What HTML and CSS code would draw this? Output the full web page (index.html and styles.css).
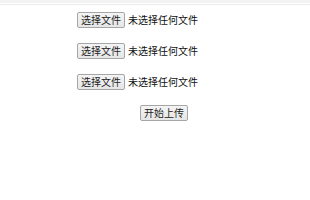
FILE: index.html
```html
<!DOCTYPE html>
<html lang="zh-CN">
<head>
    <meta charset="UTF-8">
    <title>上传文件</title>
    <link rel="stylesheet" href="styles.css">
</head>
<body>
    <div class="top-band"></div>
    <div class="top-line"></div>

    <form class="upload-form">
        <div class="file-row">
            <button type="button" class="file-btn">选择文件</button>
            <span class="file-name">未选择任何文件</span>
        </div>
        <div class="file-row">
            <button type="button" class="file-btn">选择文件</button>
            <span class="file-name">未选择任何文件</span>
        </div>
        <div class="file-row">
            <button type="button" class="file-btn">选择文件</button>
            <span class="file-name">未选择任何文件</span>
        </div>
        <div class="submit-row">
            <button type="button" class="file-btn">开始上传</button>
        </div>
    </form>
</body>
</html>
```

FILE: styles.css
```css
body {
    margin: 0;
    background: #fff;
    font-family: "Noto Sans CJK SC", "Liberation Sans", sans-serif;
    font-size: 10px;
    color: #111;
}
.top-band {
    height: 3px;
    background: #f3f3f3;
}
.top-line {
    height: 1px;
    margin-top: 1px;
    background: #ececec;
}
.upload-form {
    display: flex;
    flex-direction: column;
    gap: 15px;
    padding: 7px 0 0 77px;
}
.file-row {
    display: flex;
    align-items: center;
    gap: 3px;
    height: 16px;
}
.file-btn {
    font-family: inherit;
    font-size: 10px;
    line-height: 12px;
    height: 16px;
    padding: 0 3px;
    color: #222;
    background: linear-gradient(#f4f4f4, #e6e6e6);
    border: 1px solid #a6a6a6;
    border-radius: 2px;
}
.file-name {
    line-height: 12px;
}
.submit-row {
    height: 16px;
    padding-left: 63px;
}
```
